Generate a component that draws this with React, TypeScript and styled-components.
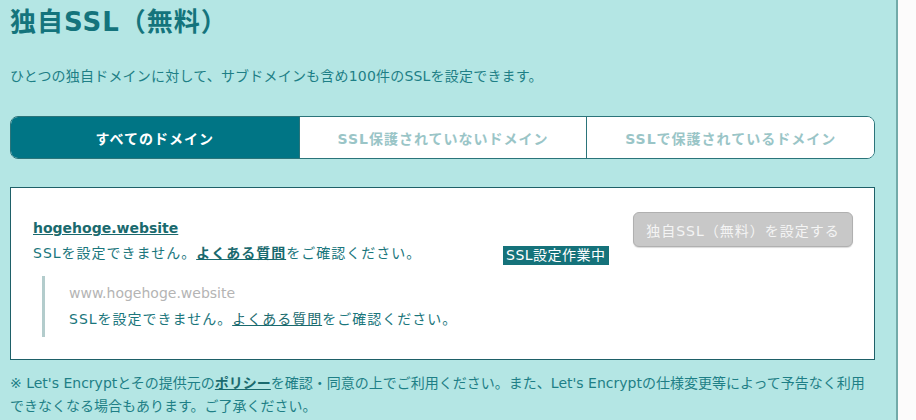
import { createGlobalStyle, styled } from "styled-components";

const GlobalStyle = createGlobalStyle`
  * {
    box-sizing: border-box;
  }

  body {
    margin: 0;
    background-color: #fcfbfb;
    font-family: "DejaVu Sans", "Noto Sans CJK JP", sans-serif;
    font-size: 14px;
    color: #1a767c;
  }
`;

const tabs = ["すべてのドメイン", "SSL保護されていないドメイン", "SSLで保護されているドメイン"];

export default function App() {
  return (
    <>
      <GlobalStyle />
      <Main>
        <Title>独自SSL（無料）</Title>
        <Lead>ひとつの独自ドメインに対して、サブドメインも含め100件のSSLを設定できます。</Lead>

        <TabList>
          {tabs.map((label, i) => (
            <Tab key={label} $active={i === 0}>
              {label}
            </Tab>
          ))}
        </TabList>

        <Card>
          <DomainRow>
            <Info>
              <DomainName href="#">hogehoge.website</DomainName>
              <Message>
                SSLを設定できません。<FaqLink href="#" $bold>よくある質問</FaqLink>をご確認ください。
              </Message>
            </Info>
            <StatusCell>
              <StatusBadge>SSL設定作業中</StatusBadge>
            </StatusCell>
            <SetupButton disabled>独自SSL（無料）を設定する</SetupButton>
          </DomainRow>

          <SubDomain>
            <SubDomainName>www.hogehoge.website</SubDomainName>
            <Message>
              SSLを設定できません。<FaqLink href="#">よくある質問</FaqLink>をご確認ください。
            </Message>
          </SubDomain>
        </Card>

        <Note>
          ※ Let's Encryptとその提供元の<FaqLink href="#" $bold>ポリシー</FaqLink>
          を確認・同意の上でご利用ください。また、Let's Encryptの仕様変更等によって予告なく利用できなくなる場合もあります。ご了承ください。
        </Note>
      </Main>
    </>
  );
}

const Main = styled.main`
  width: 898px;
  min-height: 420px;
  padding: 0 21px 0 10px;
  background-color: #b4e6e4;
  border-right: 2px solid #72aaa9;
  overflow: hidden;
`;

const Title = styled.h1`
  margin: 0;
  padding-top: 2px;
  font-size: 26px;
  line-height: 40px;
  font-weight: 700;
  letter-spacing: 1px;
  color: #14747c;
`;

const Lead = styled.p`
  margin: 24px 0 0;
  line-height: 20px;
  letter-spacing: 0.2px;
  color: #1e7f86;
`;

const TabList = styled.div`
  display: grid;
  grid-template-columns: repeat(3, 1fr);
  margin-top: 30px;
  height: 43px;
  border: 1px solid #2b747a;
  border-radius: 8px;
  overflow: hidden;
  background-color: #ffffff;
`;

const Tab = styled.div<{ $active?: boolean }>`
  display: flex;
  align-items: center;
  justify-content: center;
  font-weight: 700;
  letter-spacing: 1px;
  color: ${(p) => (p.$active ? "#ffffff" : "#9ac5c7")};
  background-color: ${(p) => (p.$active ? "#007585" : "#ffffff")};

  & + & {
    border-left: 1px solid #2b747a;
  }
`;

const Card = styled.section`
  margin-top: 28px;
  padding: 24px 21px 22px 22px;
  background-color: #ffffff;
  border: 1px solid #1e6068;
`;

const DomainRow = styled.div`
  display: grid;
  grid-template-columns: 1fr 130px 220px;
  align-items: start;
`;

const Info = styled.div`
  display: flex;
  flex-direction: column;
  align-items: flex-start;
  padding-top: 4px;
  line-height: 25px;
`;

const DomainName = styled.a`
  font-weight: 700;
  color: #1a6a6e;
  text-decoration: underline;
`;

const Message = styled.span`
  letter-spacing: 1px;
  color: #1a767c;
`;

const FaqLink = styled.a<{ $bold?: boolean }>`
  color: #1a6a6e;
  font-weight: ${(p) => (p.$bold ? 700 : 400)};
  text-decoration: underline;
`;

const StatusCell = styled.div`
  padding-top: 34px;
`;

const StatusBadge = styled.span`
  display: inline-block;
  padding: 0 3px;
  line-height: 19px;
  letter-spacing: 0.5px;
  color: #ffffff;
  background-color: #15727a;
`;

const SetupButton = styled.button`
  height: 35px;
  font-family: inherit;
  font-size: 14px;
  letter-spacing: 1px;
  color: #f4f4f4;
  background-color: #c8c8c8;
  border: 1px solid #b0b0b0;
  border-radius: 6px;
  box-shadow: 0 1px 1px rgba(0, 0, 0, 0.15);
`;

const SubDomain = styled.div`
  display: flex;
  flex-direction: column;
  margin: 10px 0 0 9px;
  padding: 4px 0 5px 24px;
  border-left: 3px solid #b3cccc;
  line-height: 26px;
`;

const SubDomainName = styled.span`
  color: #b4b4b4;
`;

const Note = styled.p`
  margin: 12px 0 0;
  line-height: 23px;
  color: #1e7f86;
`;
